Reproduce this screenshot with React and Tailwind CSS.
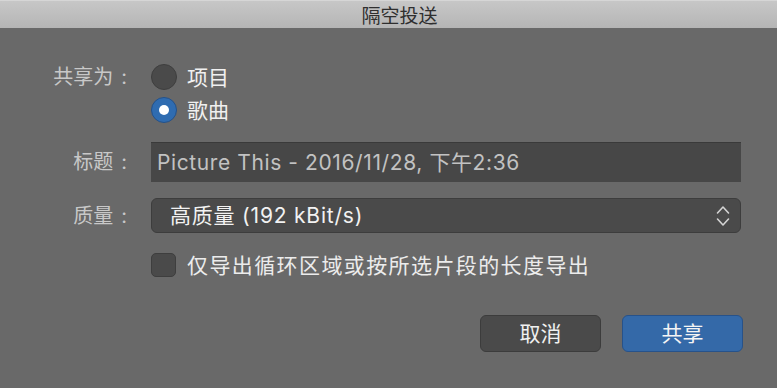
import { useState } from 'react';

const Radio = ({ checked, label, onClick }) => {
    return (
        <div className="flex items-center h-[26px] cursor-default" onClick={onClick}>
            {checked ? (
                <div className="w-[26px] h-[26px] rounded-full bg-[#2f6cb1] border border-[#24518a] flex items-center justify-center">
                    <div className="w-[10px] h-[10px] rounded-full bg-white" />
                </div>
            ) : (
                <div className="w-[26px] h-[26px] rounded-full bg-[#4a4a4a] border border-[#3e3e3e]" />
            )}
            <span className="ml-[10px] text-[21px] leading-none text-[#f0f0f0]">{label}</span>
        </div>
    );
};

// label text with the colon pushed a bit to the right, like the mac dialog
const Label = ({ text, className = '' }) => (
    <div className={`flex items-center justify-end text-[20px] leading-none text-[#c8c8c8] ${className}`}>
        <span>{text}</span>
        <span className="ml-[8px]">:</span>
    </div>
);

const App = () => {
    const [shareAs, setShareAs] = useState('song');
    const [loopOnly, setLoopOnly] = useState(false);

    return (
        <div className="w-[777px] h-[388px] bg-[#696969] flex flex-col font-['Inter','Noto_Sans_CJK_SC',sans-serif] overflow-hidden">
            {/* title bar */}
            <div className="h-[28px] shrink-0 bg-gradient-to-b from-[#c7c7c7] to-[#b5b5b5] border-t border-[#d6d6d6] flex items-center justify-center pl-[22px]">
                <span className="text-[19px] leading-none text-[#2f2f2f] font-['Noto_Sans_CJK_SC',sans-serif]">隔空投送</span>
            </div>

            <div className="grid grid-cols-[127px_1fr] gap-x-[24px] pt-[36px] pr-[36px]">
                {/* share as */}
                <Label text="共享为" className="h-[26px]" />
                <div className="flex flex-col gap-[7px]">
                    <Radio label="项目" checked={shareAs === 'project'} onClick={() => setShareAs('project')} />
                    <Radio label="歌曲" checked={shareAs === 'song'} onClick={() => setShareAs('song')} />
                </div>

                {/* title */}
                <Label text="标题" className="mt-[19px] h-[40px]" />
                <div className="mt-[19px] h-[40px] bg-[#474747] border-t border-[#3a3a3a] flex items-center pl-[6px]">
                    <span className="text-[21px] leading-none tracking-[0.6px] text-[#c2c2c2]">Picture This - 2016/11/28, 下午2:36</span>
                </div>

                {/* quality */}
                <Label text="质量" className="mt-[16px] h-[35px]" />
                <div className="mt-[16px] h-[35px] bg-[#4a4a4a] border border-[#3d3d3d] rounded-[6px] flex items-center justify-between pl-[18px] pr-[10px]">
                    <span className="text-[21px] leading-none tracking-[0.8px] text-[#f2f2f2]">高质量 (192 kBit/s)</span>
                    <svg width="14" height="24" viewBox="0 0 14 24" fill="none" stroke="#d4d4d4" strokeWidth="1.6" strokeLinecap="round" strokeLinejoin="round">
                        <path d="M1.5 9 L7 3 L12.5 9" />
                        <path d="M1.5 15 L7 21 L12.5 15" />
                    </svg>
                </div>

                {/* loop only */}
                <div />
                <div className="mt-[20px] h-[24px] flex items-center cursor-default" onClick={() => setLoopOnly(!loopOnly)}>
                    <div className="w-[25px] h-[24px] rounded-[5px] bg-[#4a4a4a] border border-[#3e3e3e] flex items-center justify-center">
                        {loopOnly ? (
                            <svg width="14" height="14" viewBox="0 0 14 14" fill="none" stroke="#fff" strokeWidth="2">
                                <path d="M2 7 L6 11 L12 3" />
                            </svg>
                        ) : null}
                    </div>
                    <span className="ml-[11px] text-[21px] leading-none tracking-[1.4px] text-[#ececec]">
                        仅导出循环区域或按所选片段的长度导出
                    </span>
                </div>
            </div>

            {/* buttons */}
            <div className="flex justify-end gap-[21px] pr-[34px] mt-[38px]">
                <button className="w-[121px] h-[37px] rounded-[6px] bg-[#4a4a4a] border border-[#3c3c3c] text-[21px] leading-none text-[#f0f0f0]">
                    取消
                </button>
                <button className="w-[121px] h-[37px] rounded-[6px] bg-[#3469a8] border border-[#27528a] text-[21px] leading-none text-[#f4f4f4]">
                    共享
                </button>
            </div>
        </div>
    );
};

export default App;
